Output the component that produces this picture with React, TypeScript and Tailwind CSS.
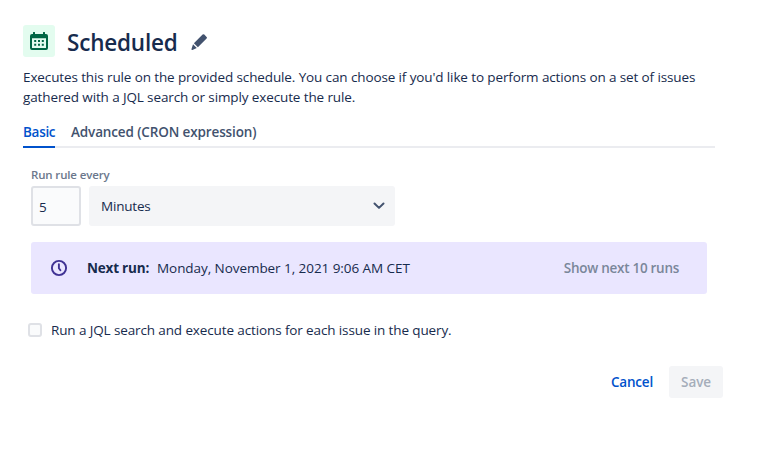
import React, { useState } from 'react';

interface TabProps {
  label: string;
  active: boolean;
  className: string;
  onClick: () => void;
}

const CalendarIcon: React.FC = () => (
  <svg width="18" height="18" viewBox="0 0 18 18" fill="none">
    <path
      fill="#006644"
      fillRule="evenodd"
      d="M3 .8a.8.8 0 0 1 2 0V2h8V.8a.8.8 0 0 1 2 0V2h1a2 2 0 0 1 2 2v12a2 2 0 0 1-2 2H2a2 2 0 0 1-2-2V4a2 2 0 0 1 2-2h1zM2 6.2V16h14V6.2H2z"
    />
    <path
      fill="#006644"
      d="M4.2 8h2v2h-2zM8 8h2v2H8zM11.8 8h2v2h-2zM4.2 11.7h2v2h-2zM8 11.7h2v2H8zM11.8 11.7h2v2h-2z"
    />
  </svg>
);

const PencilIcon: React.FC = () => (
  <svg width="18" height="18" viewBox="0 0 18 18" fill="#42526E">
    <path d="M12.6 1.6a1.2 1.2 0 0 1 1.7 0l2.3 2.3a1.2 1.2 0 0 1 0 1.7L7.9 14.3l-4-4zM3 11.3l3.8 3.8-4.4 1.8a.7.7 0 0 1-.9-.9z" />
  </svg>
);

const ClockIcon: React.FC = () => (
  <svg width="18" height="18" viewBox="0 0 18 18" fill="none" stroke="#403294" strokeWidth="1.9">
    <circle cx="9" cy="9" r="7.1" />
    <path d="M8.9 5.2v4l1.5 2" strokeLinecap="round" strokeLinejoin="round" />
  </svg>
);

const ChevronIcon: React.FC = () => (
  <svg width="12" height="8" viewBox="0 0 12 8" fill="none" stroke="#42526E" strokeWidth="2">
    <path d="M1.5 1.5L6 5.9l4.5-4.4" strokeLinecap="round" strokeLinejoin="round" />
  </svg>
);

const Tab: React.FC<TabProps> = ({ label, active, className, onClick }) => (
  <button
    onClick={onClick}
    className={`-mb-0.5 h-8 border-b-2 pt-0.5 text-left font-semibold whitespace-nowrap ${className} ${
      active ? 'border-[#0052CC] text-[#0052CC]' : 'border-transparent text-[#42526E]'
    }`}
  >
    {label}
  </button>
);

export default function App() {
  const [tab, setTab] = useState('basic');
  const [interval, setIntervalValue] = useState('5');
  const [jql, setJql] = useState(false);

  return (
    <div className="h-[452px] w-[766px] bg-white pt-[25px] pl-[23px] font-['Open_Sans',sans-serif] text-[13.5px] leading-5 text-[#172B4D]">
      <header className="flex h-8 items-center">
        <div className="flex h-8 w-8 items-center justify-center rounded-[3px] bg-[#E3FCEF]">
          <CalendarIcon />
        </div>
        <h1 className="ml-3 w-[111px] pt-1 text-[22.5px] leading-8 font-semibold tracking-[-0.2px] whitespace-nowrap">
          Scheduled
        </h1>
        <button className="mt-0.5 ml-3">
          <PencilIcon />
        </button>
      </header>

      <p className="mt-2.5 w-[700px] tracking-[-0.12px]">
        <span className="block whitespace-nowrap">
          Executes this rule on the provided schedule. You can choose if you'd like to perform actions on a set of issues
        </span>
        <span className="block whitespace-nowrap">gathered with a JQL search or simply execute the rule.</span>
      </p>

      <nav className="mt-[9px] flex w-[692px] gap-4 border-b-2 border-[#EBECF0] tracking-[-0.13px]">
        <Tab label="Basic" active={tab === 'basic'} className="w-8 tracking-[-0.3px]" onClick={() => setTab('basic')} />
        <Tab
          label="Advanced (CRON expression)"
          active={tab === 'advanced'}
          className="w-[186px]"
          onClick={() => setTab('advanced')}
        />
      </nav>

      <section className="ml-2 w-[676px] pt-[19px]">
        <label className="block h-[19px] text-[11.5px] leading-4 font-semibold tracking-[-0.15px] text-[#6B778C]">
          Run rule every
        </label>
        <div className="flex gap-2">
          <input
            value={interval}
            onChange={(e) => setIntervalValue(e.target.value)}
            className="h-10 w-[50px] rounded-[3px] border-2 border-[#DFE1E6] bg-[#FAFBFC] px-1.5 pt-0.5 outline-none"
          />
          <button className="flex h-10 w-[306px] items-center justify-between rounded-[3px] bg-[#F4F5F7] pr-2.5 pl-3 tracking-[-0.2px]">
            <span>Minutes</span>
            <ChevronIcon />
          </button>
        </div>

        <div className="mt-4 flex h-[52px] items-center rounded-[3px] bg-[#EAE6FF] pr-7 pl-[19px]">
          <ClockIcon />
          <span className="ml-[19px] w-[70px] font-bold tracking-[-0.2px] whitespace-nowrap">Next run:</span>
          <span className="tracking-[-0.06px] whitespace-nowrap">Monday, November 1, 2021 9:06 AM CET</span>
          <button className="ml-auto font-semibold tracking-[-0.28px] whitespace-nowrap text-[#7A869A]">
            Show next 10 runs
          </button>
        </div>
      </section>

      <label className="mt-[26px] ml-[5px] flex h-5 items-center gap-[9px]">
        <input
          type="checkbox"
          checked={jql}
          onChange={() => setJql(!jql)}
          className="h-3.5 w-3.5 appearance-none rounded-[3px] border-2 border-[#DFE1E6] bg-[#FAFBFC] checked:bg-[#0052CC]"
        />
        <span className="tracking-[-0.12px] whitespace-nowrap">
          Run a JQL search and execute actions for each issue in the query.
        </span>
      </label>

      <footer className="mt-[26px] flex w-[700px] items-center justify-end gap-4 font-semibold">
        <button className="tracking-[-0.2px] text-[#0052CC]">Cancel</button>
        <button disabled className="h-8 w-[54px] rounded-[3px] bg-[#F4F5F7] tracking-[-0.1px] text-[#A5ADBA]">
          Save
        </button>
      </footer>
    </div>
  );
}
